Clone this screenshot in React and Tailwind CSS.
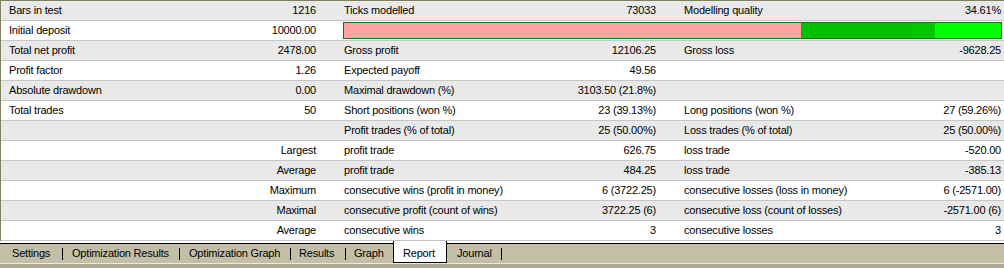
import React from 'react';

// rows of the tester report: [label, value] per group, null = empty group
const rows = [
  [['Bars in test', '1216'], ['Ticks modelled', '73033'], ['Modelling quality', '34.61%']],
  'bar',
  [['Total net profit', '2478.00'], ['Gross profit', '12106.25'], ['Gross loss', '-9628.25']],
  [['Profit factor', '1.26'], ['Expected payoff', '49.56'], null],
  [['Absolute drawdown', '0.00'], ['Maximal drawdown (%)', '3103.50 (21.8%)'], null],
  [['Total trades', '50'], ['Short positions (won %)', '23 (39.13%)'], ['Long positions (won %)', '27 (59.26%)']],
  [null, ['Profit trades (% of total)', '25 (50.00%)'], ['Loss trades (% of total)', '25 (50.00%)']],
  [['', 'Largest'], ['profit trade', '626.75'], ['loss trade', '-520.00']],
  [['', 'Average'], ['profit trade', '484.25'], ['loss trade', '-385.13']],
  [['', 'Maximum'], ['consecutive wins (profit in money)', '6 (3722.25)'], ['consecutive losses (loss in money)', '6 (-2571.00)']],
  [['', 'Maximal'], ['consecutive profit (count of wins)', '3722.25 (6)'], ['consecutive loss (count of losses)', '-2571.00 (6)']],
  [['', 'Average'], ['consecutive wins', '3'], ['consecutive losses', '3']],
];

const padding = ['pl-2 pr-5', 'pl-2 pr-5', 'pl-2 pr-[3px]'];

const Pair = ({ pair, idx }) => (
  <div className={`flex items-center justify-between whitespace-nowrap ${padding[idx]}`}>
    <span>{pair ? pair[0] : ''}</span>
    <span>{pair ? pair[1] : ''}</span>
  </div>
);

const Sep = () => <div className="w-px h-[12px] bg-black" />;

const App = () => {
  return (
    <div className="w-[1004px] h-[268px] overflow-hidden bg-white text-black text-[11px] tracking-[-0.2px] font-['Liberation_Sans',Arial,sans-serif]">
      <div className="border-t border-l border-[#807f5e]">
        {rows.map((row, i) => {
          const bg = i % 2 === 0 ? 'bg-[#e9e9e9]' : 'bg-white';
          if (row === 'bar') {
            return (
              <div key={i} className={`grid grid-cols-[335px_340px_1fr] h-[20px] border-b border-[#c6c6c6] ${bg}`}>
                <Pair pair={['Initial deposit', '10000.00']} idx={0} />
                <div className="col-span-2 pl-[7px] pr-[2px] pt-[1px] pb-[1px] flex">
                  <div className="flex flex-1 border border-[#008000]">
                    <div className="flex-1 bg-[#ffa2a2]" />
                    <div className="w-[111px] bg-[#00c000]" />
                    <div className="w-[23px] bg-[#00c800]" />
                    <div className="w-[66px] bg-[#00ff00]" />
                  </div>
                </div>
              </div>
            );
          }
          return (
            <div key={i} className={`grid grid-cols-[335px_340px_1fr] h-[20px] border-b border-[#c6c6c6] ${bg}`}>
              {row.map((pair, j) => (
                <Pair key={j} pair={pair} idx={j} />
              ))}
            </div>
          );
        })}
      </div>

      {/* bottom tab bar */}
      <div className="flex h-[22px] bg-[linear-gradient(to_bottom,#ffffff_0,#ffffff_2px,#000000_2px,#000000_3px,#c3bfa7_3px)]">
        <div className="flex items-center pt-[3px] w-[62px] pl-[12px]">Settings</div>
        <div className="flex items-center pt-[3px]"><Sep /></div>
        <div className="flex items-center pt-[3px] w-[116px] pl-[9px]">Optimization Results</div>
        <div className="flex items-center pt-[3px]"><Sep /></div>
        <div className="flex items-center pt-[3px] w-[110px] pl-[9px]">Optimization Graph</div>
        <div className="flex items-center pt-[3px]"><Sep /></div>
        <div className="flex items-center pt-[3px] w-[54px] pl-[8px]">Results</div>
        <div className="flex items-center pt-[3px]"><Sep /></div>
        <div className="flex items-center pt-[3px] w-[47px] pl-[8px]">Graph</div>
        <div className="flex items-center pt-[3px] w-[54px] pl-[9px] bg-white border-l border-r border-b border-black">Report</div>
        <div className="flex items-center pt-[3px] w-[54px] pl-[10px]">Journal</div>
        <div className="flex items-center pt-[3px]"><Sep /></div>
      </div>
      <div className="h-px bg-[#ecebe3]" />
      <div className="h-[4px] bg-[#aeaa90]" />
    </div>
  );
};

export default App;
